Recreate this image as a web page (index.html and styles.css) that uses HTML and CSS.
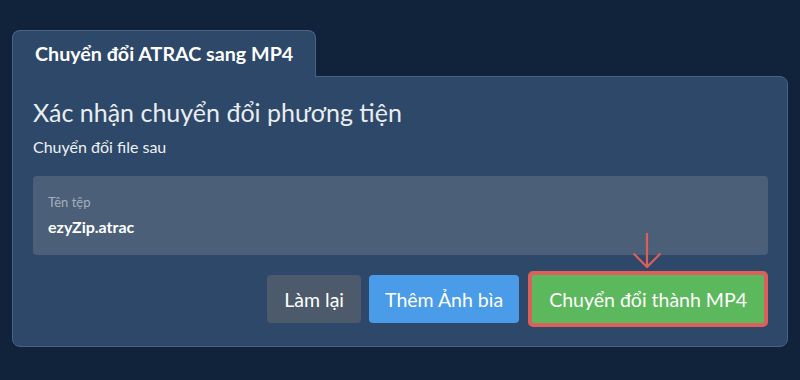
FILE: index.html
```html
<!DOCTYPE html>
<html lang="vi">
<head>
    <meta charset="UTF-8">
    <meta name="viewport" content="width=device-width, initial-scale=1.0">
    <title>Chuyển đổi ATRAC sang MP4</title>
    <link rel="stylesheet" href="styles.css">
</head>
<body>
    <div class="converter">
        <div class="tabs">
            <div class="tab">Chuyển đổi ATRAC sang MP4</div>
        </div>

        <div class="panel">
            <h2>Xác nhận chuyển đổi phương tiện</h2>
            <p class="subtitle">Chuyển đổi file sau</p>

            <div class="file-box">
                <div class="file-label">Tên tệp</div>
                <div class="file-name">ezyZip.atrac</div>
            </div>

            <div class="actions">
                <button class="btn btn-reset">Làm lại</button>
                <button class="btn btn-cover">Thêm Ảnh bìa</button>
                <div class="convert-wrap">
                    <!-- mũi tên chỉ vào nút chuyển đổi -->
                    <svg class="arrow" width="30" height="36" viewBox="0 0 30 36">
                        <path d="M15 0 L15 34 M1.5 20.5 L15 34 L28.5 20.5" fill="none" stroke="#dc5f5a" stroke-width="2.2"/>
                    </svg>
                    <button class="btn btn-convert">Chuyển đổi thành MP4</button>
                </div>
            </div>
        </div>
    </div>
</body>
</html>
```

FILE: styles.css
```css
body {
    margin: 0;
    background-color: #10233a;
    font-family: Lato, "Open Sans", sans-serif;
    color: #eef1f4;
}
.converter {
    padding: 30px 12px 0 12px;
}
.tabs {
    display: flex;
}
.tab {
    position: relative;
    z-index: 1;
    background-color: #2d4868;
    border: 1px solid #4b6383;
    border-bottom: none;
    border-radius: 8px 8px 0 0;
    padding: 0 22px;
    height: 46px;
    line-height: 46px;
    font-size: 19.7px;
    font-weight: bold;
    color: #ffffff;
    margin-bottom: -1px;
}
.panel {
    background-color: #2d4868;
    border: 1px solid #4b6383;
    border-radius: 0 8px 8px 8px;
    padding: 20px 19px 19px 20px;
}
.panel h2 {
    margin: 0;
    font-size: 25px;
    font-weight: normal;
    line-height: 30px;
    color: #e9edf1;
}
.subtitle {
    margin: 10px 0 0;
    font-size: 16px;
    line-height: 20px;
    color: #eef1f4;
}
.file-box {
    margin-top: 19px;
    background-color: #4b5f78;
    border-radius: 4px;
    padding: 17px 15px 18px;
}
.file-label {
    font-size: 13px;
    line-height: 18px;
    color: #a4afbd;
}
.file-name {
    margin-top: 6px;
    font-size: 16px;
    font-weight: bold;
    line-height: 20px;
    color: #ffffff;
}
.actions {
    display: flex;
    justify-content: flex-end;
    align-items: center;
    gap: 8px;
    margin-top: 16px;
}
.btn {
    height: 48px;
    border: none;
    border-radius: 4px;
    padding: 0 17px;
    font-family: Lato, "Open Sans", sans-serif;
    font-size: 19.5px;
    color: #ffffff;
    cursor: pointer;
}
.btn-reset {
    background-color: #4c5a6b;
}
.btn-cover {
    background-color: #4a9be8;
    padding: 0 16px;
}
.convert-wrap {
    position: relative;
    margin-left: 1px;
}
.arrow {
    position: absolute;
    top: -38px;
    left: 50%;
    margin-left: -16px;
}
.btn-convert {
    display: block;
    height: 56px;
    background-color: #5cb85c;
    border: 4px solid #dc5f5a;
    border-radius: 5px;
    padding: 0 17px;
}
```
